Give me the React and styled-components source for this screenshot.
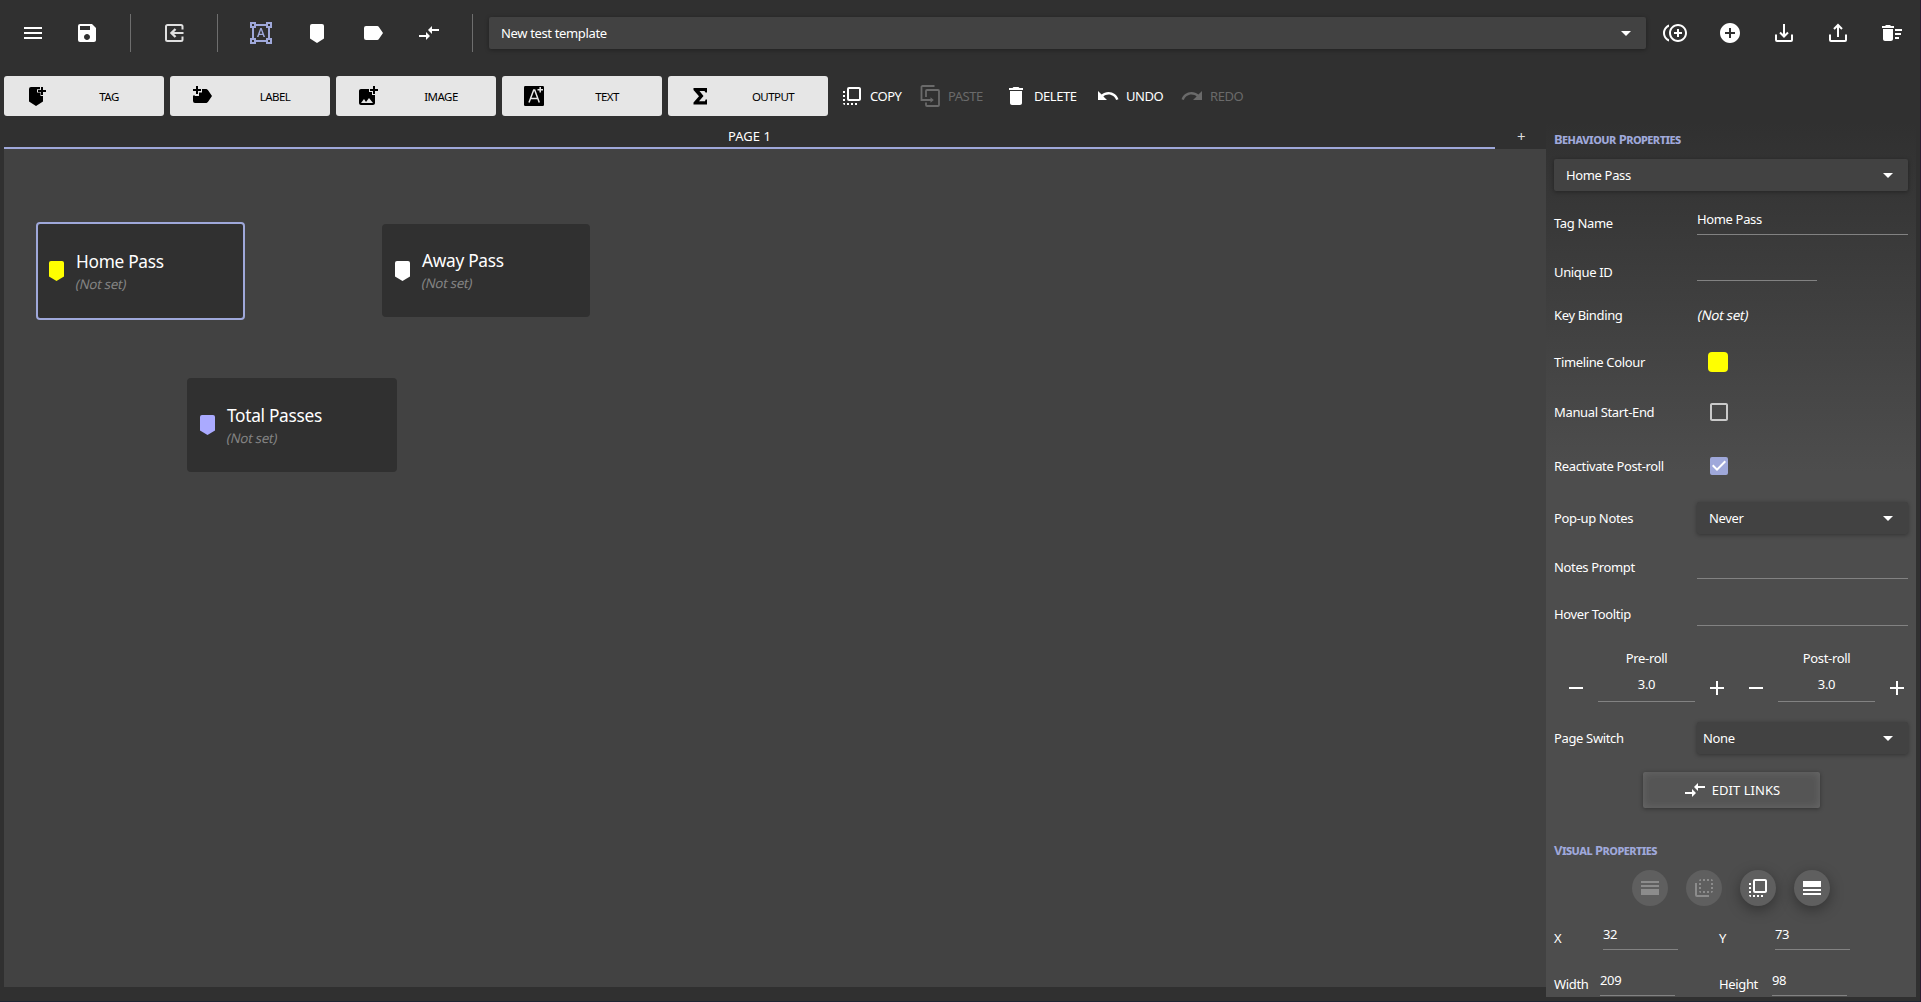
import styled, { createGlobalStyle, css } from 'styled-components';
import {
  MdMenu,
  MdSave,
  MdFormatShapes,
  MdCompareArrows,
  MdControlPointDuplicate,
  MdAddCircle,
  MdDeleteSweep,
  MdAddPhotoAlternate,
  MdFlipToFront,
  MdFlipToBack,
  MdDelete,
  MdArrowDropDown,
  MdCheckBox,
  MdCheckBoxOutlineBlank,
} from 'react-icons/md';

const Svg = ({ children, size = 24, color = 'currentColor' }) => (
  <svg width={size} height={size} viewBox='0 0 24 24' fill={color}>
    {children}
  </svg>
);

const ExitIcon = () => (
  <Svg>
    <g fill='none' stroke='#e0e0e0' strokeWidth='2'>
      <path d='M20.5 8.5v-3A1.5 1.5 0 0 0 19 4H5.5A1.5 1.5 0 0 0 4 5.5v13A1.5 1.500 0 0 0 5.5 20H19a1.5 1.5 0 0 0 1.5-1.500v-3' />
      <path d='M21.5 12H10' />
      <path d='M13.500 8l-4 4 4 4' strokeWidth='2.4' />
    </g>
  </Svg>
);

const TagIcon = () => (
  <Svg>
    <path d='M7 3h10a2 2 0 0 1 2 2v12.5L12 22l-7-4.500V5a2 2 0 0 1 2-2z' />
  </Svg>
);

const LabelIcon = () => (
  <Svg>
    <path d='M5 5h11.2a2 2 0 0 1 1.700.9L22 12l-4.100 6.100a2 2 0 0 1-1.700.9H5a2 2 0 0 1-2-2V7a2 2 0 0 1 2-2z' />
  </Svg>
);

const TrayIcon = ({ up }) => (
  <Svg>
    <g fill='none' stroke='currentColor' strokeWidth='2'>
      <path d='M4 13.5V19a1 1 0 0 0 1 1h14a1 1 0 0 0 1-1v-5.5' />
      {up ? <path d='M12 16V4.5M8 8l4-4 4 4' /> : <path d='M12 3v12M8 11.5l4 4 4-4' />}
    </g>
  </Svg>
);

const AddTagIcon = () => (
  <Svg>
    <path d='M7 3h6v5.500h3.500V12H19v5.500L12 22l-7-4.500V5a2 2 0 0 1 2-2z' />
    <path d='M13 3h3v2.300h-3zM17 3h2v3h3v2h-3v3h-2V8h-3V6h3z' />
  </Svg>
);

const AddLabelIcon = () => (
  <Svg>
    <path d='M12 5h4.500l1.400.9L22 12l-4.100 6.100-1.400.9H5a2 2 0 0 1-2-2v-5.500h2V12h4V8.500h3z' />
    <path d='M6 2h2v3h3v2H8v3H6V7H3V5h3z' />
  </Svg>
);

const AddTextIcon = () => (
  <Svg>
    <rect x='2' y='2' width='20' height='20' rx='1.2' />
    <path
      d='M7 18.500L11.700 6h1l4.600 12.500M8.600 14.500h7M15.500 5.800H21M18.200 3v5.600'
      fill='none'
      stroke='#e6e6e6'
      strokeWidth='1.500'
    />
  </Svg>
);

const SumIcon = () => (
  <Svg>
    <path d='M5.500 4H19v4.500h-1.500L16.500 7h-5l4 5-4.500 5.300h6l.6-1.800H19v5H5.500v-2l5.500-6.300L5.500 6z' />
  </Svg>
);

const PasteIcon = () => (
  <Svg>
    <g fill='none' stroke='currentColor' strokeWidth='1.8'>
      <path d='M16.500 2h-12a1 1 0 0 0-1 1v13h10' />
      <path d='M8 13V7a1 1 0 0 1 1-1h11a1 1 0 0 1 1 1v14a1 1 0 0 1-1 1H9a1 1 0 0 1-1-1v-2.500' />
    </g>
    <path d='M12.500 13.200l3.300 2.800-3.300 2.800z' />
  </Svg>
);

const UndoIcon = ({ flip }) => (
  <Svg>
    <g transform={flip ? 'matrix(-1 0 0 1 24 0)' : undefined}>
      <path d='M12.500 8c-2.650 0-5.050.990-6.900 2.600L2 7v9h9l-3.620-3.620c1.390-1.160 3.160-1.880 5.120-1.880 3.540 0 6.550 2.310 7.600 5.500l2.370-.780C21.080 11.030 17.150 8 12.500 8z' />
    </g>
  </Svg>
);

const LinesIcon = ({ heavyTop }) => (
  <Svg>
    {heavyTop ? (
      <path d='M3 5h18v6H3zM3 13h18v2H3zM3 17h18v2H3z' />
    ) : (
      <path d='M3 5h18v2H3zM3 9h18v2H3zM3 13h18v6H3z' />
    )}
  </Svg>
);

const MinusIcon = () => (
  <Svg>
    <path d='M5 11h14v2H5z' />
  </Svg>
);

const PlusIcon = () => (
  <Svg>
    <path d='M11 5h2v6h6v2h-6v6h-2v-6H5v-2h6z' />
  </Svg>
);

const nodes = [
  { name: 'Home Pass', x: 32, y: 73, width: 209, height: 98, color: '#ffff00', selected: true },
  { name: 'Away Pass', x: 378, y: 75, width: 208, height: 93, color: '#ffffff' },
  { name: 'Total Passes', x: 183, y: 229, width: 210, height: 94, color: '#aaaaff' },
];

const Dropdown = ({ value, indent = 12 }) => (
  <Select $indent={indent}>
    <span>{value}</span>
    <MdArrowDropDown size={24} />
  </Select>
);

const Stepper = ({ title, value }) => (
  <StepperWrap>
    <StepButton>
      <MinusIcon />
    </StepButton>
    <StepValue>
      <span>{title}</span>
      <span>{value}</span>
    </StepValue>
    <StepButton>
      <PlusIcon />
    </StepButton>
  </StepperWrap>
);

const TopBar = () => (
  <Bar>
    <BarIcon $w={66}>
      <MdMenu size={24} />
    </BarIcon>
    <BarIcon $w={42}>
      <MdSave size={24} />
    </BarIcon>
    <Divider $left={22} />
    <BarIcon $w={86}>
      <ExitIcon />
    </BarIcon>
    <Divider />
    <BarIcon $w={86} $active>
      <MdFormatShapes size={24} />
    </BarIcon>
    <BarIcon $w={26}>
      <TagIcon />
    </BarIcon>
    <BarIcon $w={86}>
      <LabelIcon />
    </BarIcon>
    <BarIcon $w={26}>
      <MdCompareArrows size={24} />
    </BarIcon>
    <Divider $left={30} />
    <TemplateSelect>
      <Dropdown value='New test template' />
    </TemplateSelect>
    <BarIcon $w={58}>
      <MdControlPointDuplicate size={24} />
    </BarIcon>
    <BarIcon $w={52}>
      <MdAddCircle size={24} />
    </BarIcon>
    <BarIcon $w={56}>
      <TrayIcon />
    </BarIcon>
    <BarIcon $w={52}>
      <TrayIcon up />
    </BarIcon>
    <BarIcon $w={56}>
      <MdDeleteSweep size={24} />
    </BarIcon>
  </Bar>
);

const Toolbar = () => (
  <Tools>
    <ToolButton>
      <AddTagIcon />
      <span>TAG</span>
    </ToolButton>
    <ToolButton>
      <AddLabelIcon />
      <span>LABEL</span>
    </ToolButton>
    <ToolButton>
      <MdAddPhotoAlternate size={24} />
      <span>IMAGE</span>
    </ToolButton>
    <ToolButton>
      <AddTextIcon />
      <span>TEXT</span>
    </ToolButton>
    <ToolButton>
      <SumIcon />
      <span>OUTPUT</span>
    </ToolButton>
    <Actions>
      <Action $w={78}>
        <MdFlipToFront size={24} />
        COPY
      </Action>
      <Action $w={86} $disabled>
        <PasteIcon />
        PASTE
      </Action>
      <Action $w={92}>
        <MdDelete size={24} />
        DELETE
      </Action>
      <Action $w={84}>
        <UndoIcon />
        UNDO
      </Action>
      <Action $w={84} $disabled>
        <UndoIcon flip />
        REDO
      </Action>
    </Actions>
  </Tools>
);

const Properties = () => (
  <Panel>
    <Heading $h={35}>Behaviour Properties</Heading>
    <PanelSelect>
      <Dropdown value='Home Pass' />
    </PanelSelect>
    <Row $h={46}>
      <Label>Tag Name</Label>
      <Field $h={35}>Home Pass</Field>
    </Row>
    <Row $h={51}>
      <Label>Unique ID</Label>
      <Field $h={35} $w={120} />
    </Row>
    <Row $h={35}>
      <Label>Key Binding</Label>
      <KeyBinding>(Not set)</KeyBinding>
    </Row>
    <Row $h={59}>
      <Label>Timeline Colour</Label>
      <Swatch />
    </Row>
    <Row $h={41}>
      <Label>Manual Start-End</Label>
      <Check>
        <MdCheckBoxOutlineBlank size={24} />
      </Check>
    </Row>
    <Row $h={67}>
      <Label>Reactivate Post-roll</Label>
      <Check $checked>
        <MdCheckBox size={24} />
      </Check>
    </Row>
    <Row $h={36} $top={1}>
      <Label>Pop-up Notes</Label>
      <Dropdown value='Never' />
    </Row>
    <Row $h={62}>
      <Label>Notes Prompt</Label>
      <Field $h={43} />
    </Row>
    <Row $h={32}>
      <Label>Hover Tooltip</Label>
      <Field $h={28} />
    </Row>
    <Steppers>
      <Stepper title='Pre-roll' value='3.0' />
      <Stepper title='Post-roll' value='3.0' />
    </Steppers>
    <Row $h={54}>
      <Label>Page Switch</Label>
      <Dropdown value='None' indent={6} />
    </Row>
    <LinksButton>
      <MdCompareArrows size={24} />
      EDIT LINKS
    </LinksButton>
    <Heading $h={39} $top={23}>
      Visual Properties
    </Heading>
    <Rounds>
      <Round $disabled>
        <LinesIcon />
      </Round>
      <Round $disabled>
        <MdFlipToBack size={24} />
      </Round>
      <Round>
        <MdFlipToFront size={24} />
      </Round>
      <Round>
        <LinesIcon heavyTop />
      </Round>
    </Rounds>
    <Row $h={46}>
      <Label $w={49}>X</Label>
      <Field $h={35} $w={75}>
        32
      </Field>
      <Label $w={56} $left={41}>
        Y
      </Label>
      <Field $h={35} $w={75}>
        73
      </Field>
    </Row>
    <Row $h={46}>
      <Label $w={46}>Width</Label>
      <Field $h={35} $w={75}>
        209
      </Field>
      <Label $w={53} $left={44}>
        Height
      </Label>
      <Field $h={35} $w={75}>
        98
      </Field>
    </Row>
  </Panel>
);

const App = () => {
  return (
    <Page>
      <GlobalStyle />
      <TopBar />
      <Toolbar />
      <Main>
        <Workspace>
          <Tabs>
            <Tab>PAGE 1</Tab>
            <AddTab>+</AddTab>
          </Tabs>
          <Canvas>
            {nodes.map((node) => (
              <Node key={node.name} $node={node}>
                <Svg size={24} color={node.color}>
                  <path d='M6 2h11a2 2 0 0 1 2 2v13.500L11.500 22 4 17.500V4a2 2 0 0 1 2-2z' />
                </Svg>
                <div>
                  <NodeTitle>{node.name}</NodeTitle>
                  <NodeKey>(Not set)</NodeKey>
                </div>
              </Node>
            ))}
          </Canvas>
        </Workspace>
        <Properties />
      </Main>
    </Page>
  );
};

const GlobalStyle = createGlobalStyle`
  * {
    box-sizing: border-box;
  }
  body {
    margin: 0;
    background: #303030;
    overflow: hidden;
  }
  svg {
    display: block;
    flex: none;
  }
`;

const Page = styled.div`
  height: 1002px;
  display: flex;
  flex-direction: column;
  overflow: hidden;
  background: #303030;
  border-right: 1px solid #2c1c30;
  border-bottom: 1px solid #1f2533;
  color: #fff;
  font-family: Tahoma, 'Noto Sans', sans-serif;
  font-size: 13px;
  letter-spacing: -0.35px;
  line-height: 16px;
`;

const Bar = styled.header`
  height: 66px;
  flex: none;
  display: flex;
  align-items: center;
`;

const BarIcon = styled.div`
  width: ${({ $w }) => $w}px;
  display: flex;
  justify-content: center;
  flex: none;
  color: ${({ $active }) => ($active ? '#9fa8da' : '#fff')};
`;

const Divider = styled.div`
  width: 1px;
  height: 38px;
  flex: none;
  margin-left: ${({ $left = 0 }) => $left}px;
  background: #6e6e6e;
`;

const TemplateSelect = styled.div`
  flex: 1;
  display: flex;
  margin-left: 16px;
`;

const Select = styled.div`
  flex: 1;
  height: 32px;
  display: flex;
  align-items: center;
  justify-content: space-between;
  padding: 0 8px 0 ${({ $indent }) => $indent}px;
  background: #424242;
  border-radius: 2px;
  box-shadow: 0 1px 4px rgba(0, 0, 0, 0.35);
`;

const Tools = styled.div`
  height: 56px;
  flex: none;
  display: flex;
  gap: 6px;
  padding: 10px 0 0 4px;
`;

const ToolButton = styled.div`
  width: 160px;
  height: 40px;
  display: flex;
  align-items: center;
  padding-left: 20px;
  background: #e6e6e6;
  border-radius: 3px;
  color: #000;
  font-size: 11.5px;
  letter-spacing: -0.55px;

  span {
    flex: 1;
    padding: 1px 0 0 6px;
    text-align: center;
  }
`;

const Actions = styled.div`
  height: 40px;
  display: flex;
  margin-left: 6px;
`;

const Action = styled.div`
  width: ${({ $w }) => $w}px;
  display: flex;
  align-items: center;
  gap: 6px;
  letter-spacing: -0.45px;
  color: ${({ $disabled }) => ($disabled ? '#6a6a6a' : '#fff')};
`;

const Main = styled.div`
  flex: 1;
  min-height: 0;
  display: flex;
  padding: 0 4px 4px;
`;

const Workspace = styled.section`
  flex: 1;
  display: flex;
  flex-direction: column;
`;

const Tabs = styled.div`
  height: 27px;
  flex: none;
  display: flex;
`;

const Tab = styled.div`
  flex: 1;
  border-bottom: 2px solid #9fa8da;
  text-align: center;
  padding-top: 6px;
  letter-spacing: 0;
`;

const AddTab = styled.div`
  width: 51px;
  padding: 6px 0 0 22px;
  color: #ddd;
  font-size: 15px;
`;

const Canvas = styled.div`
  position: relative;
  height: 838px;
  background: #424242;
`;

const Node = styled.div`
  position: absolute;
  left: ${({ $node }) => $node.x}px;
  top: ${({ $node }) => $node.y}px;
  width: ${({ $node }) => $node.width}px;
  height: ${({ $node }) => $node.height}px;
  display: flex;
  align-items: center;
  gap: 7px;
  padding-left: 9px;
  background: #303030;
  border-radius: 4px;
  ${({ $node }) =>
    $node.selected &&
    css`
      padding-left: 7px;
      border: 2px solid #9fa8da;
    `}
`;

const NodeTitle = styled.div`
  padding-top: 3px;
  font-size: 17.3px;
  line-height: 22px;
  letter-spacing: -0.3px;
`;

/* slanted upright glyphs, wider than the real italic face */
const slanted = css`
  transform: skewX(-12deg);
  font-size: 13.3px;
  letter-spacing: -0.3px;
`;

const NodeKey = styled.div`
  line-height: 22px;
  color: #838383;
  ${slanted}
`;

const KeyBinding = styled.span`
  margin-left: 1px;
  ${slanted}
`;

const Panel = styled.aside`
  width: 370px;
  flex: none;
  padding: 0 8px;
  overflow: hidden;
  background: linear-gradient(#303030, #4d4d4d 350px);
`;

const Heading = styled.h2`
  height: ${({ $h }) => $h}px;
  margin: ${({ $top = 0 }) => $top}px 0 0;
  padding-bottom: 2px;
  display: flex;
  align-items: center;
  color: #9fa8da;
  font-size: 13px;
  font-variant: small-caps;
  letter-spacing: -0.55px;
`;

const PanelSelect = styled.div`
  display: flex;
  padding: 2px 0 9px;
`;

const Row = styled.div`
  height: ${({ $h }) => $h}px;
  margin-top: ${({ $top = 0 }) => $top}px;
  display: flex;
  align-items: center;
`;

const Label = styled.label`
  width: ${({ $w = 143 }) => $w}px;
  margin-left: ${({ $left = 0 }) => $left}px;
  flex: none;
`;

const Field = styled.div`
  ${({ $w }) => ($w ? `width: ${$w}px;` : 'flex: 1;')}
  height: ${({ $h }) => $h}px;
  align-self: flex-start;
  display: flex;
  align-items: flex-end;
  padding-bottom: 7px;
  border-bottom: 1px solid #828282;
`;

const Swatch = styled.div`
  width: 20px;
  height: 20px;
  margin-left: 11px;
  border-radius: 4px;
  background: #ffff00;
`;

const Check = styled.div`
  margin-left: 10px;
  color: ${({ $checked }) => ($checked ? '#9fa8da' : '#cacaca')};
  ${({ $checked }) =>
    $checked &&
    css`
      background: linear-gradient(#fff, #fff) center / 14px 14px no-repeat;
    `}
`;

const Steppers = styled.div`
  height: 81px;
  display: flex;
  padding: 18px 0 0 10px;
`;

const StepperWrap = styled.div`
  width: 180px;
  flex: none;
  display: flex;
`;

const StepButton = styled.div`
  width: 24px;
  padding-top: 28px;
`;

const StepValue = styled.div`
  width: 97px;
  height: 54px;
  margin: 0 10px;
  display: flex;
  flex-direction: column;
  align-items: center;
  gap: 10px;
  padding-top: 2px;
  border-bottom: 1px solid #828282;
`;

const LinksButton = styled.div`
  width: 177px;
  height: 36px;
  margin: 7px auto 0 89px;
  display: flex;
  align-items: center;
  justify-content: center;
  gap: 5px;
  background: #555;
  border-radius: 2px;
  letter-spacing: 0.05px;
  box-shadow:
    inset 0 0 8px rgba(255, 255, 255, 0.12),
    0 1px 4px rgba(0, 0, 0, 0.35);
`;

const Rounds = styled.div`
  display: flex;
  gap: 18px;
  padding: 0 0 9px 78px;
`;

const Round = styled.div`
  width: 36px;
  height: 36px;
  display: flex;
  align-items: center;
  justify-content: center;
  border-radius: 50%;
  background: #5f5f5f;
  box-shadow: 0 4px 14px rgba(0, 0, 0, 0.35);
  ${({ $disabled }) =>
    $disabled &&
    css`
      color: #8c8c8c;
      box-shadow: none;
    `}
`;

export default App;
